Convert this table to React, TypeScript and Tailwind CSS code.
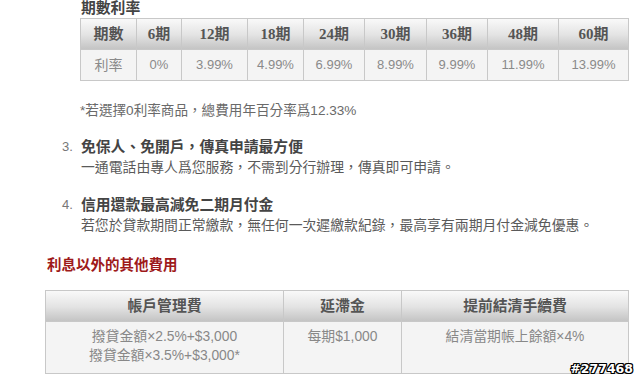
import React from "react";

const sans = "font-['Liberation_Sans','Noto_Sans_CJK_TC',sans-serif]";

const periods = ["6期", "12期", "18期", "24期", "30期", "36期", "48期", "60期"];
const rates = ["0%", "3.99%", "4.99%", "6.99%", "8.99%", "9.99%", "11.99%", "13.99%"];
const colW = ["w-[56px]", "w-[45px]", "w-[66px]", "w-[56px]", "w-[61px]", "w-[62px]", "w-[61px]", "w-[71px]", "w-[70px]"];

const headBg = "bg-linear-to-b from-[#f9f9f9] via-[#e4e4e4] to-[#c2c2c2]";

export default function App() {
  return (
    <div className={`relative w-[640px] h-[376px] overflow-hidden bg-white ${sans}`}>
      <div className="pl-[81px] text-[14.8px] leading-[17px] font-bold text-[#444]">期數利率</div>

      <table className="ml-[80px] mt-[1px] w-[548px] table-fixed border-collapse">
        <colgroup>
          {colW.map((w, i) => (
            <col key={i} className={w} />
          ))}
        </colgroup>
        <tbody>
          <tr className={`h-[31px] ${headBg}`}>
            <td className="border border-[#c8c8c8] text-center p-0 text-[15px] font-bold text-[#555] font-['Liberation_Serif','Noto_Sans_CJK_TC',serif]">
              期數
            </td>
            {periods.map((p) => (
              <td
                key={p}
                className="border border-[#c8c8c8] text-center p-0 text-[15px] font-bold text-[#555] font-['Liberation_Serif','Noto_Sans_CJK_TC',serif]"
              >
                {p}
              </td>
            ))}
          </tr>
          <tr className="h-[31px] bg-[#f4f4f4]">
            <td className="border border-[#c8c8c8] text-center p-0 text-[14px] text-[#8a8a8a]">利率</td>
            {rates.map((r) => (
              <td key={r} className="border border-[#c8c8c8] text-center p-0 text-[13px] text-[#8a8a8a]">
                {r}
              </td>
            ))}
          </tr>
        </tbody>
      </table>

      <div className="pl-[80px] mt-[20px] text-[13.6px] leading-[20px] text-[#6a6a6a]">
        *若選擇0利率商品，總費用年百分率爲12.33%
      </div>

      <div className="mt-[16px] flex pl-[62px]">
        <div className="w-[19px] text-[13px] leading-[20px] text-[#777]">3.</div>
        <div>
          <div className="text-[14.8px] leading-[20px] font-bold text-[#444]">免保人、免開戶，傳真申請最方便</div>
          <div className="text-[13.85px] leading-[20px] text-[#5a5a5a]">一通電話由專人爲您服務，不需到分行辦理，傳真即可申請。</div>
        </div>
      </div>

      <div className="mt-[18px] flex pl-[62px]">
        <div className="w-[19px] text-[13px] leading-[20px] text-[#777]">4.</div>
        <div>
          <div className="text-[14.8px] leading-[20px] font-bold text-[#444]">信用還款最高減免二期月付金</div>
          <div className="text-[13.85px] leading-[20px] text-[#5a5a5a]">
            若您於貸款期間正常繳款，無任何一次遲繳款紀錄，最高享有兩期月付金減免優惠。
          </div>
        </div>
      </div>

      <div className="pl-[47px] mt-[20px] text-[14.5px] leading-[20px] font-bold text-[#9e1a1a]">利息以外的其他費用</div>

      <table className="ml-[45px] mt-[15px] w-[583px] table-fixed border-collapse">
        <colgroup>
          <col className="w-[238px]" />
          <col className="w-[118px]" />
          <col className="w-[227px]" />
        </colgroup>
        <tbody>
          <tr className={`h-[31px] ${headBg}`}>
            <td className="border border-[#c8c8c8] text-center p-0 text-[14.8px] font-bold text-[#555]">帳戶管理費</td>
            <td className="border border-[#c8c8c8] text-center p-0 text-[14.8px] font-bold text-[#555]">延滯金</td>
            <td className="border border-[#c8c8c8] text-center p-0 text-[14.8px] font-bold text-[#555]">提前結清手續費</td>
          </tr>
          <tr className="h-[52px] bg-[#f4f4f4]">
            <td className="border border-[#c8c8c8] text-center align-top pt-[5px] pb-0 text-[13.85px] leading-[19px] text-[#888]">
              <div>撥貸金額×2.5%+$3,000</div>
              <div>撥貸金額×3.5%+$3,000*</div>
            </td>
            <td className="border border-[#c8c8c8] text-center align-top pt-[5px] pb-0 text-[13.85px] leading-[19px] text-[#888]">
              每期$1,000
            </td>
            <td className="border border-[#c8c8c8] text-center align-top pt-[5px] pb-0 text-[13.85px] leading-[19px] text-[#888]">
              結清當期帳上餘額×4%
            </td>
          </tr>
        </tbody>
      </table>

      <div className="absolute right-[7px] bottom-[1px] text-[12.5px] leading-[13px] font-bold text-white font-['DejaVu_Sans',sans-serif] [text-shadow:1px_0_0_#000,-1px_0_0_#000,0_1px_0_#000,0_-1px_0_#000,1px_1px_0_#000,-1px_-1px_0_#000,1px_-1px_0_#000,-1px_1px_0_#000]">
        #277468
      </div>
    </div>
  );
}
